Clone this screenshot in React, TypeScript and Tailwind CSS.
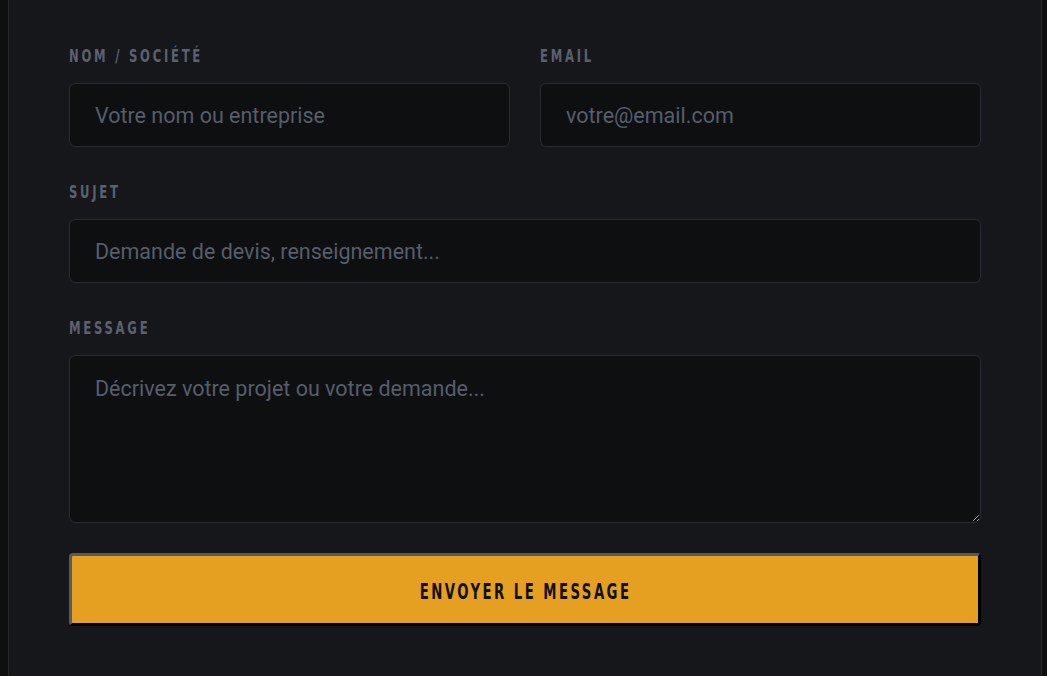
import type { JSX } from 'react';

// narrow caps face used for labels and the button
const capsFont = "[font-family:'DejaVu_Sans_Condensed','DejaVu_Sans',sans-serif]";

const fieldClass =
  'w-full rounded-md border border-[#2a2c33] bg-[#0e0f11] px-[25px] text-[21.5px] text-[#c9ccd3] outline-none placeholder:text-[#565d6b] [font-family:Roboto,sans-serif]';

function Label({ htmlFor, children }: { htmlFor: string; children: string }): JSX.Element {
  return (
    <label htmlFor={htmlFor} className="mb-[17px] mt-[3px] block h-5 leading-5">
      <span
        className={`inline-block origin-left scale-x-[0.76] whitespace-nowrap text-[17px] font-bold uppercase tracking-[3.6px] text-[#5b616f] ${capsFont}`}
      >
        {children}
      </span>
    </label>
  );
}

type FieldProps = {
  id: string;
  label: string;
  placeholder: string;
  type?: string;
};

function Field({ id, label, placeholder, type = 'text' }: FieldProps): JSX.Element {
  return (
    <div>
      <Label htmlFor={id}>{label}</Label>
      <input id={id} type={type} placeholder={placeholder} className={`${fieldClass} h-16`} />
    </div>
  );
}

export default function App(): JSX.Element {
  return (
    <div className="min-h-[676px] bg-[#0e0f11] pl-2 pr-[5px]">
      <form
        className="flex min-h-[676px] flex-col gap-8 border-x border-[#25272d] bg-[#16171b] px-[60px] pt-[43px]"
        onSubmit={(e) => e.preventDefault()}
      >
        <div className="grid grid-cols-2 gap-[30px]">
          <Field id="name" label="Nom / Société" placeholder="Votre nom ou entreprise" />
          <Field id="email" type="email" label="Email" placeholder="votre@email.com" />
        </div>
        <Field id="subject" label="Sujet" placeholder="Demande de devis, renseignement..." />
        <div>
          <Label htmlFor="message">Message</Label>
          <textarea
            id="message"
            placeholder="Décrivez votre projet ou votre demande..."
            className={`${fieldClass} block h-[168px] py-[19px] leading-7`}
          />
        </div>
        <button
          type="submit"
          className="-mt-[2px] h-[73px] rounded-[4px] border-[3px] border-b-black border-l-[#5a5a5a] border-r-black border-t-[#5a5a5a] bg-[#e6a021] pt-[5px]"
        >
          <span
            className={`inline-block scale-x-[0.72] whitespace-nowrap pl-[3px] text-[20.5px] font-bold uppercase tracking-[3.4px] text-[#111] ${capsFont}`}
          >
            Envoyer le message
          </span>
        </button>
      </form>
    </div>
  );
}
